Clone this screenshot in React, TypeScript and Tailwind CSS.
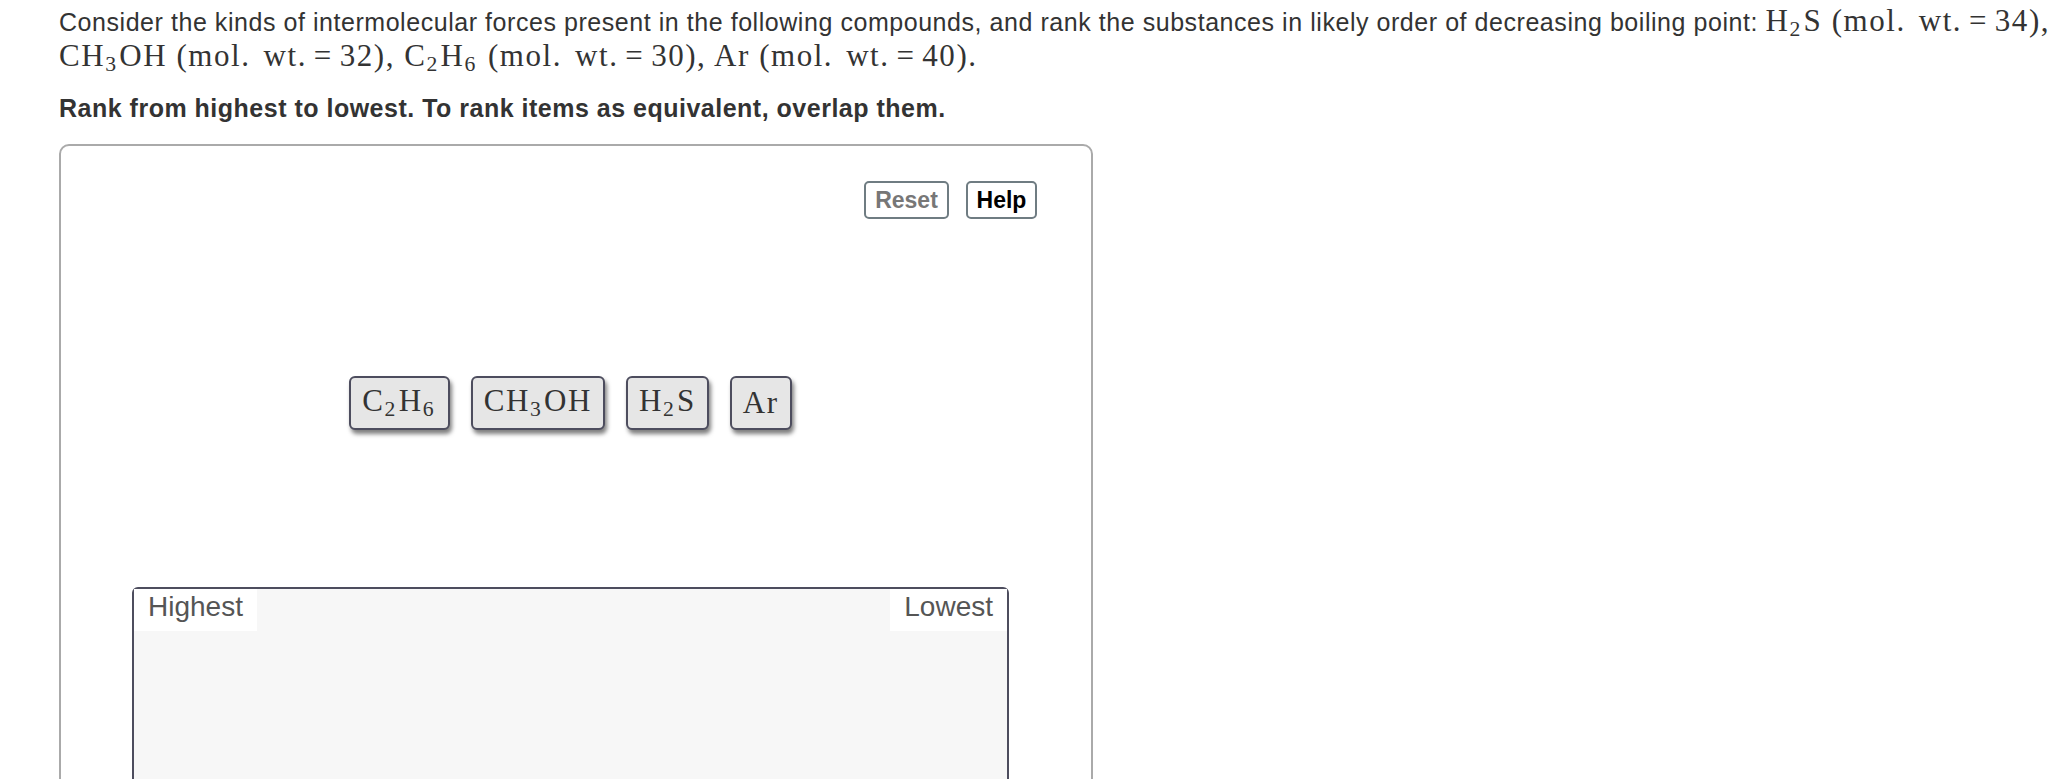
import type { ReactNode } from "react";

const serif = "font-['Liberation_Serif','DejaVu_Serif',serif]";

const Sub = ({ children }: { children: ReactNode }) => (
  <span className="text-[0.7em] align-[-0.22em] leading-none mr-[0.08em]">
    {children}
  </span>
);

const Math = ({ children }: { children: ReactNode }) => (
  <span className={`${serif} text-[31px] tracking-[0.05em] leading-none`}>
    {children}
  </span>
);

const MolWt = ({ wt }: { wt: number }) => (
  <>
    {" "}
    (mol.<span className="ml-[13px]">wt.</span>
    <span className="mx-[0.22em]">=</span>
    {wt})
  </>
);

const Chip = ({ children }: { children: ReactNode }) => (
  <div
    className={`${serif} h-[54px] px-[11px] flex items-center rounded-[6px] border-2 border-[#4d4d5e] bg-[#e6e6e6] text-[31px] tracking-[0.05em] text-[#333] shadow-[2px_4px_4px_rgba(0,0,0,0.5)]`}
  >
    <span className="leading-none">{children}</span>
  </div>
);

export default function App() {
  return (
    <div className="min-h-screen bg-white pl-[59px] pt-[5px] text-[#333] font-['Liberation_Sans',Arial,sans-serif]">
      <p className="text-[25px] leading-[33px]">
        <span className="block whitespace-nowrap tracking-[0.55px]">
          Consider the kinds of intermolecular forces present in the following
          compounds, and rank the substances in likely order of decreasing
          boiling point:{" "}
          <Math>
            H<Sub>2</Sub>S
            <MolWt wt={34} />,
          </Math>
        </span>
        <span className="block whitespace-nowrap">
          <Math>
            CH<Sub>3</Sub>OH
            <MolWt wt={32} />, C<Sub>2</Sub>H<Sub>6</Sub>
            <MolWt wt={30} />, Ar
            <MolWt wt={40} />.
          </Math>
        </span>
      </p>

      <p className="mt-[18px] text-[25px] font-bold leading-[28px] tracking-[0.5px]">
        Rank from highest to lowest. To rank items as equivalent, overlap them.
      </p>

      <div className="mt-[22px] w-[1034px] h-[700px] rounded-[10px] border-2 border-[#aaaaaa] pt-[35px]">
        <div className="flex justify-end gap-[17px] pr-[54px]">
          <button
            type="button"
            className="w-[85px] h-[38px] rounded-[5px] border-2 border-[#6f7c82] bg-white text-[23px] font-bold text-[#777777]"
          >
            Reset
          </button>
          <button
            type="button"
            className="w-[71px] h-[38px] rounded-[5px] border-2 border-[#6f7c82] bg-white text-[23px] font-bold text-black"
          >
            Help
          </button>
        </div>

        <div className="ml-[71px] w-[877px]">
          <div className="mt-[157px] flex justify-center gap-[21px]">
            <Chip>
              C<Sub>2</Sub>H<Sub>6</Sub>
            </Chip>
            <Chip>
              CH<Sub>3</Sub>OH
            </Chip>
            <Chip>
              H<Sub>2</Sub>S
            </Chip>
            <Chip>Ar</Chip>
          </div>

          <div className="mt-[157px] h-[260px] flex justify-between items-start rounded-t-[6px] border-2 border-[#4d4d5e] bg-[#f7f7f7]">
            <span className="bg-white px-[14px] pb-[6px] text-[28px] leading-[36px] text-[#555555]">
              Highest
            </span>
            <span className="bg-white px-[14px] pb-[6px] text-[28px] leading-[36px] text-[#555555]">
              Lowest
            </span>
          </div>
        </div>
      </div>
    </div>
  );
}
